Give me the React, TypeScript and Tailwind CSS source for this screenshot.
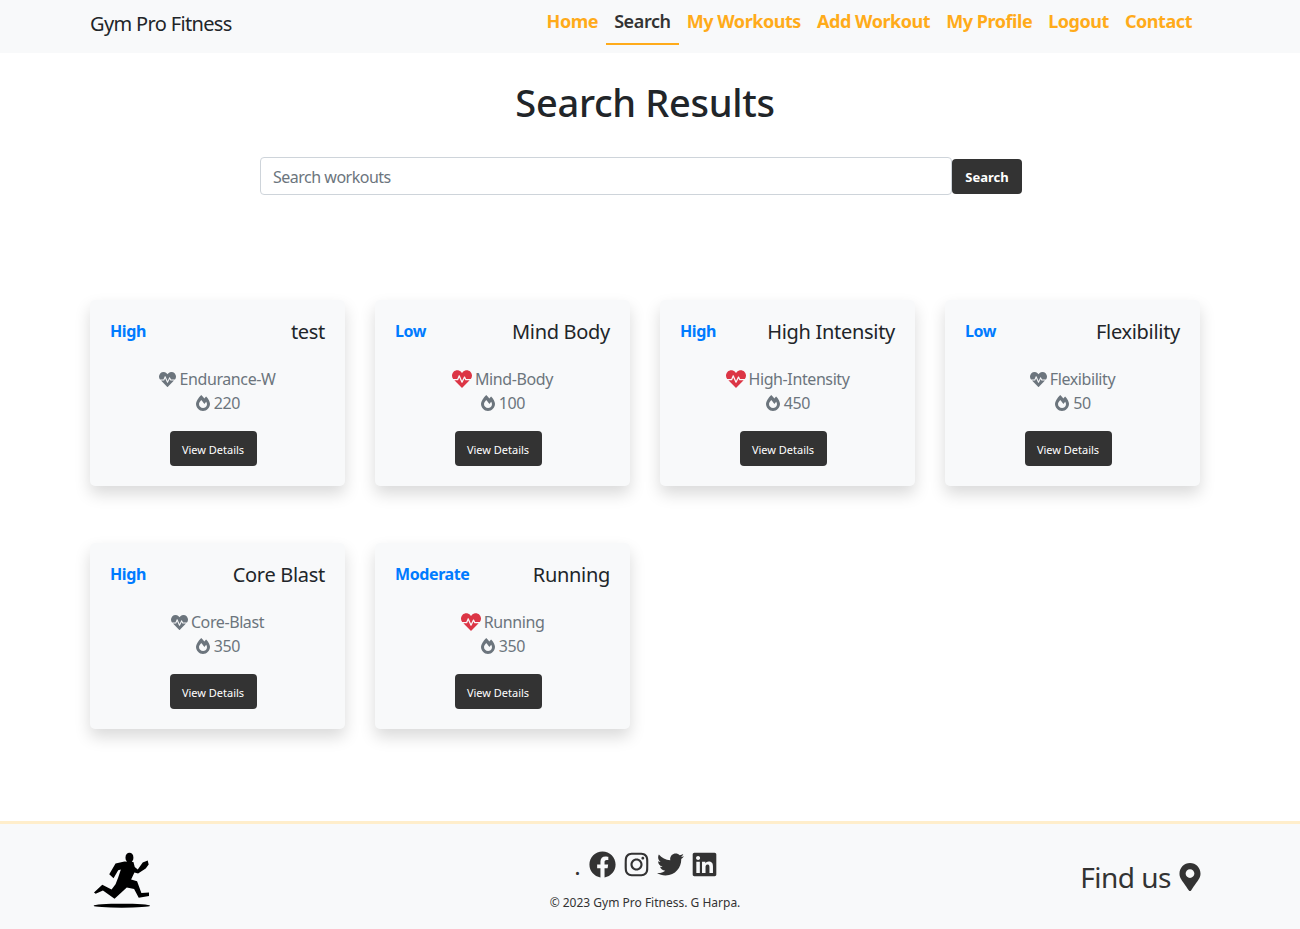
import { FaFacebook, FaFireAlt, FaHeartbeat, FaInstagram, FaLinkedin, FaMapMarkerAlt, FaTwitter } from "react-icons/fa";

const navLinks = ["Home", "Search", "My Workouts", "Add Workout", "My Profile", "Logout", "Contact"];

const workouts = [
  { level: "High", title: "test", type: "Endurance-W", calories: 220, red: false },
  { level: "Low", title: "Mind Body", type: "Mind-Body", calories: 100, red: true },
  { level: "High", title: "High Intensity", type: "High-Intensity", calories: 450, red: true },
  { level: "Low", title: "Flexibility", type: "Flexibility", calories: 50, red: false },
  { level: "High", title: "Core Blast", type: "Core-Blast", calories: 350, red: false },
  { level: "Moderate", title: "Running", type: "Running", calories: 350, red: true },
];

function RunnerLogo() {
  return (
    <svg viewBox="70 125 175 175" className="w-[58px] h-[58px]" fill="#000">
      <ellipse cx="180" cy="142" rx="12" ry="15" />
      <path d="M138 160 L165 154 L192 155 L196 170 L205 178 L220 157 L235 151 L238 163 L229 175 L206 190 L195 187 L185 208 L203 213 L216 249 L239 247 L239 258 L208 263 L194 237 L172 232 L135 266 L100 241 L78 251 L73 247 L98 224 L126 238 L138 222 L146 202 L154 178 L146 180 L132 204 L119 192 Z" />
      <ellipse cx="157" cy="287" rx="85" ry="6" />
    </svg>
  );
}

function WorkoutCard({ level, title, type, calories, red }: (typeof workouts)[number]) {
  return (
    <div className="h-[186px] rounded-[5px] bg-[#f8f9fa] px-[20px] pt-[18px] shadow-[0_8px_16px_rgba(0,0,0,0.15)]">
      <div className="flex justify-between items-start h-[32px]">
        <span className="text-[#007bff] text-[16px] font-bold leading-[26px] tracking-[-0.4px]">{level}</span>
        <span className="text-[#212529] text-[20px] leading-[28px] tracking-[-0.3px]">{title}</span>
      </div>
      <div className="mt-[17px] text-center text-[#6c757d] text-[16px] leading-[24px] tracking-[-0.4px]">
        <div className="flex items-center justify-center gap-[3px]">
          {red ? <FaHeartbeat className="text-[#dc3545] text-[20px]" /> : <FaHeartbeat className="text-[#6c757d] text-[17px]" />}
          <span>{type}</span>
        </div>
        <div className="flex items-center justify-center gap-[3px]">
          <FaFireAlt className="text-[16px]" />
          <span>{calories}</span>
        </div>
      </div>
      <div className="mt-[16px] pr-[9px] flex justify-center">
        <button className="h-[35px] w-[87px] rounded-[4px] bg-[#333] text-white text-[11px] pt-[3px]">View Details</button>
      </div>
    </div>
  );
}

export default function App() {
  return (
    <div className="min-h-[929px] flex flex-col bg-white font-['Noto_Sans','Open_Sans',sans-serif] text-[#212529]">
      <nav className="h-[53px] bg-[#f8f9fa] pl-[90px] pr-[100px] flex justify-between">
        <a className="text-[20px] leading-[28px] pt-[10px] tracking-[-0.65px] text-[#212529]">Gym Pro Fitness</a>
        <ul className="flex">
          {navLinks.map((link) => (
            <li
              key={link}
              className={
                link === "Search"
                  ? "h-[45px] px-[8px] pt-[8px] text-[18px] font-semibold leading-[26px] tracking-[-0.4px] text-[#333] border-b-2 border-[#ffab1a]"
                  : "h-[45px] px-[8px] pt-[8px] text-[18px] font-bold leading-[26px] tracking-[-0.45px] text-[#ffab1a]"
              }
            >
              {link}
            </li>
          ))}
        </ul>
      </nav>

      <main className="flex-1 px-[90px]">
        <h1 className="mt-[25px] pr-[10px] text-center text-[38px] font-medium leading-[48px] tracking-[-0.3px] text-[#212529]">Search Results</h1>
        <form className="mt-[31px] ml-[170px] flex items-center">
          <input
            placeholder="Search workouts"
            className="w-[692px] h-[38px] rounded-[4px] border border-[#ced4da] bg-white px-[12px] pt-[2px] text-[16px] tracking-[-0.5px] placeholder:text-[#6c757d] outline-none"
          />
          <button type="button" className="w-[70px] h-[35px] rounded-[4px] bg-[#333] pt-[4px] text-white text-[13px] font-bold">Search</button>
        </form>
        <div className="mt-[105px] grid grid-cols-[repeat(4,255px)] gap-x-[30px] gap-y-[57px]">
          {workouts.map((w) => (
            <WorkoutCard key={w.title} {...w} />
          ))}
        </div>
      </main>

      <footer className="h-[108px] border-t-[3px] border-[#ffeecb] bg-[#f8f9fa] pl-[90px] pr-[100px] grid grid-cols-[1fr_auto_1fr] items-start">
        <div className="pt-[28px] pl-[3px]"><RunnerLogo /></div>
        <div className="pt-[25px] flex flex-col items-center text-[#333]">
          <div className="flex items-center gap-[7px] h-[30px] pl-[2px] text-[27px]">
            <span className="text-[24px] leading-[30px] pt-[4px] mr-[1px]">.</span>
            <FaFacebook />
            <FaInstagram />
            <FaTwitter />
            <FaLinkedin />
          </div>
          <p className="mt-[15px] text-[12px] leading-[18px] text-[#333]">© 2023 Gym Pro Fitness. G Harpa.</p>
        </div>
        <div className="pt-[35px] flex items-center justify-end gap-[4.5px] text-[28px] leading-[36px] tracking-[-0.5px] text-[#333]">
          <span>Find us</span>
          <FaMapMarkerAlt className="text-[28px] mr-[-3.5px]" />
        </div>
      </footer>
    </div>
  );
}
